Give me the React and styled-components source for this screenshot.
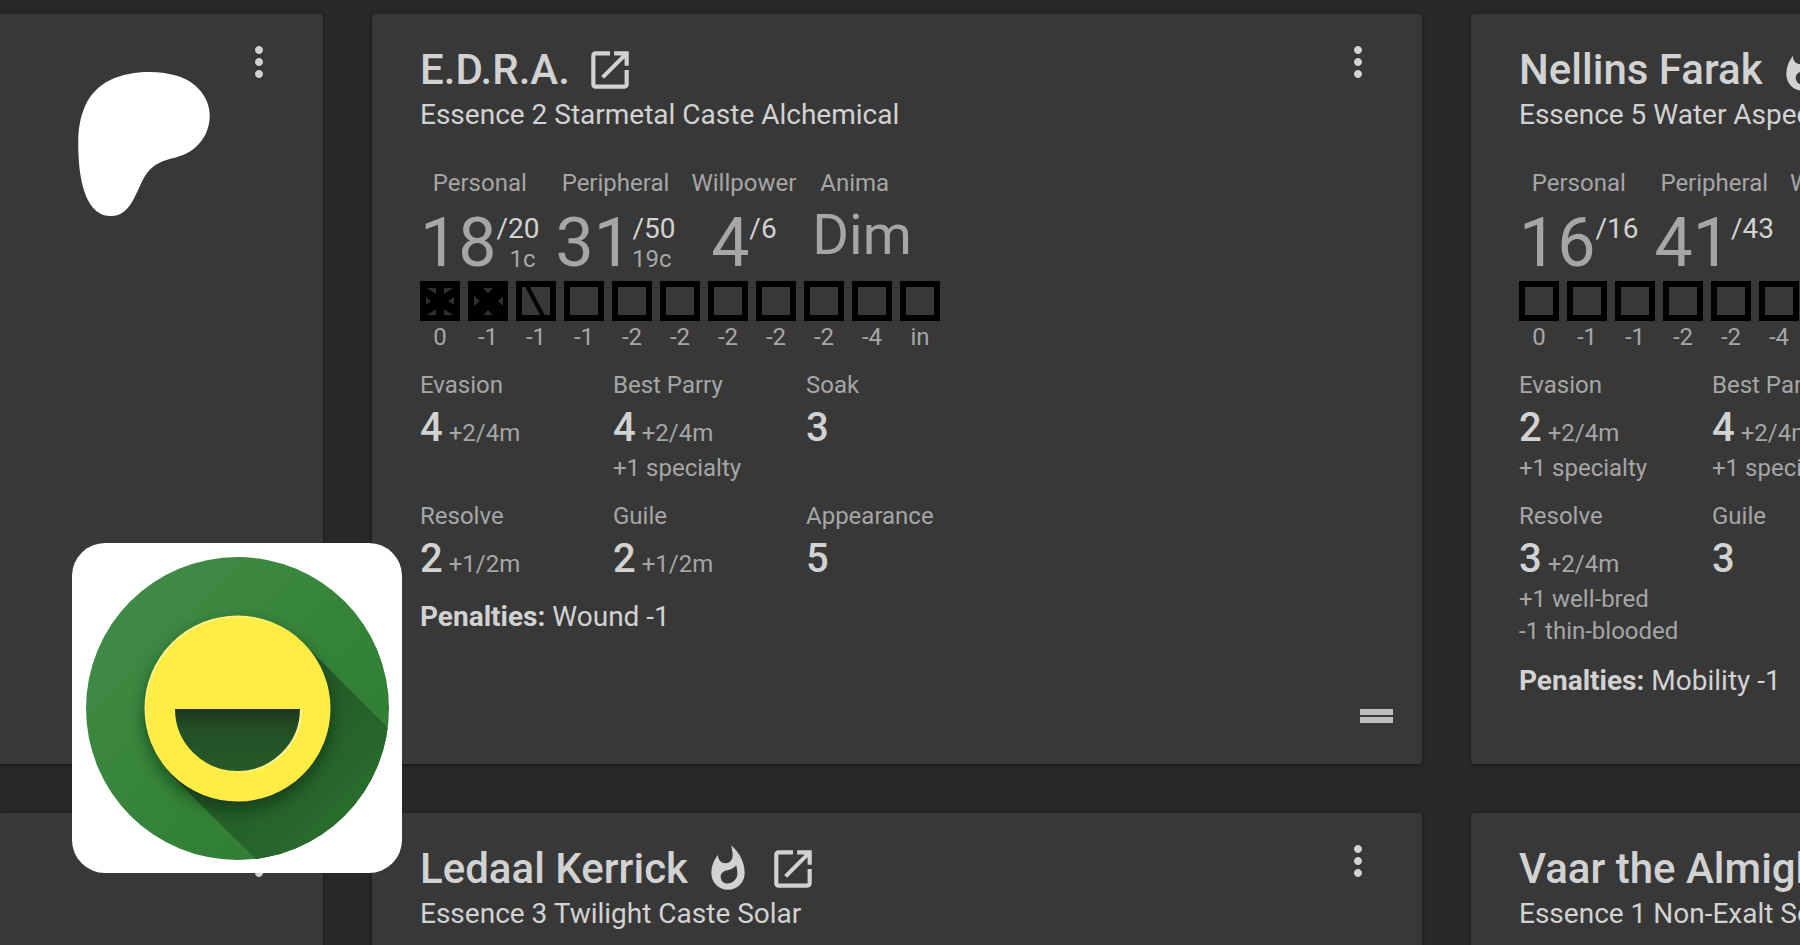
import React from 'react';
import styled, { createGlobalStyle } from 'styled-components';
import { MdMoreVert, MdOpenInNew, MdWhatshot } from 'react-icons/md';

const characters = {
    edra: {
        name: 'E.D.R.A.',
        info: 'Essence 2 Starmetal Caste Alchemical',
        pools: [
            { label: 'Personal', current: 18, total: 20, committed: '1c' },
            { label: 'Peripheral', current: 31, total: 50, committed: '19c' },
            { label: 'Willpower', current: 4, total: 6 },
        ],
        anima: 'Dim',
        health: [
            ['aggravated', '0'], ['lethal', '-1'], ['bashing', '-1'], ['', '-1'],
            ['', '-2'], ['', '-2'], ['', '-2'], ['', '-2'], ['', '-2'], ['', '-4'], ['', 'in'],
        ],
        stats: [
            [
                { label: 'Evasion', value: 4, bonus: '+2/4m' },
                { label: 'Best Parry', value: 4, bonus: '+2/4m', notes: ['+1 specialty'] },
                { label: 'Soak', value: 3 },
            ],
            [
                { label: 'Resolve', value: 2, bonus: '+1/2m' },
                { label: 'Guile', value: 2, bonus: '+1/2m' },
                { label: 'Appearance', value: 5 },
            ],
        ],
        penalties: 'Wound -1',
    },
    nellins: {
        name: 'Nellins Farak',
        inCombat: true,
        info: 'Essence 5 Water Aspect',
        pools: [
            { label: 'Personal', current: 16, total: 16 },
            { label: 'Peripheral', current: 41, total: 43 },
            { label: 'Willpower', current: 5, total: 5 },
        ],
        health: [['', '0'], ['', '-1'], ['', '-1'], ['', '-2'], ['', '-2'], ['', '-4']],
        stats: [
            [
                { label: 'Evasion', value: 2, bonus: '+2/4m', notes: ['+1 specialty'] },
                { label: 'Best Parry', value: 4, bonus: '+2/4m', notes: ['+1 specialty'] },
            ],
            [
                { label: 'Resolve', value: 3, bonus: '+2/4m', notes: ['+1 well-bred', '-1 thin-blooded'] },
                { label: 'Guile', value: 3 },
            ],
        ],
        penalties: 'Mobility -1',
    },
    ledaal: { name: 'Ledaal Kerrick', inCombat: true, info: 'Essence 3 Twilight Caste Solar' },
    vaar: { name: 'Vaar the Almighty', info: 'Essence 1 Non-Exalt Sorcerer' },
};

const HealthBox = ({ damage }) => (
    <svg width="40" height="40" viewBox="0 0 40 40" aria-hidden="true">
        <rect x="3" y="3" width="34" height="34" fill="none" stroke="#000" strokeWidth="6"/>
        {damage === 'bashing' && <path d="M11 5L27 35" stroke="#000" strokeWidth="4"/>}
        {damage === 'lethal' && <>
            <rect x="4" y="4" width="32" height="32" fill="#000"/>
            <path d="M15 7h10l-5 5zM15 34h10l-5-5zM6 15v10l6-5zM35 15v10l-5-5z" fill="#2e3034"/>
        </>}
        {damage === 'aggravated' && <>
            <rect x="4" y="4" width="32" height="32" fill="#000"/>
            <path
                d="M7 7h9v6zM33 7h-9v6zM7 34h9v-6zM33 34h-9v-6zM6 16v8l5-4zM34 16v8l-6-4z"
                fill="#2e3034"
            />
        </>}
    </svg>
);

const CharacterCard = ({ character }) => (
    <Card>
        <Header>
            {character && (
                <Heading>
                    <TitleRow>
                        <Name>{character.name}</Name>
                        {character.inCombat && <MdWhatshot size={50}/>}
                        <OpenLink href="#" aria-label={`Open ${character.name}`}>
                            <MdOpenInNew size={50}/>
                        </OpenLink>
                    </TitleRow>
                    <Info>{character.info}</Info>
                </Heading>
            )}
            <MenuButton type="button" aria-label="More">
                <MdMoreVert size={48}/>
            </MenuButton>
        </Header>
        {character?.pools && (
            <Body>
                <Pools>
                    {character.pools.map((pool) => (
                        <Pool key={pool.label}>
                            <Label>{pool.label}</Label>
                            <PoolValue>
                                <Current>{pool.current}</Current>
                                <PoolSide>
                                    <Total>/{pool.total}</Total>
                                    {pool.committed && <Committed>{pool.committed}</Committed>}
                                </PoolSide>
                            </PoolValue>
                        </Pool>
                    ))}
                    {character.anima && (
                        <Pool $left>
                            <Label>Anima</Label>
                            <Anima>{character.anima}</Anima>
                        </Pool>
                    )}
                </Pools>
                <Health>
                    {character.health.map(([damage, penalty], i) => (
                        <Level key={i}>
                            <HealthBox damage={damage}/>
                            <Penalty>{penalty}</Penalty>
                        </Level>
                    ))}
                </Health>
                <Stats>
                    {character.stats.map((row, i) => (
                        <StatRow key={i}>
                            {row.map((stat) => (
                                <div key={stat.label}>
                                    <Label>{stat.label}</Label>
                                    <StatValue>
                                        <strong>{stat.value}</strong>
                                        {stat.bonus && <span>{stat.bonus}</span>}
                                    </StatValue>
                                    {stat.notes?.map((note) => <Note key={note}>{note}</Note>)}
                                </div>
                            ))}
                        </StatRow>
                    ))}
                </Stats>
                <Penalties><b>Penalties:</b> {character.penalties}</Penalties>
            </Body>
        )}
        <Footer>
            <svg width="48" height="24" viewBox="0 0 48 24" aria-hidden="true">
                <path d="M8 5h33v6H8zM8 13h33v6H8z" fill="currentColor"/>
            </svg>
        </Footer>
    </Card>
);

const PatreonLogo = () => (
    <svg width="144" height="144" viewBox="0 0 24 24" aria-label="Patreon">
        <path
            fill="#fff"
            d="M22.957 7.21c-.004-3.064-2.391-5.576-5.191-6.482-3.478-1.125-8.064-.962-11.384.604C2.357 3.231 1.093 7.391 1.046 11.54c-.039 3.411.302 12.396 5.369 12.46 3.765.047 4.326-4.804 6.068-7.141 1.24-1.662 2.836-2.132 4.801-2.618 3.376-.836 5.678-3.501 5.673-7.031Z"
        />
    </svg>
);

const AppLogo = () => (
    <svg width="330" height="330" viewBox="0 0 330 330" aria-label="Lot-Casting Atemi">
        <defs>
            <linearGradient id="green" x1="0" y1="0" x2="1" y2="1">
                <stop offset="0.1" stopColor="#418b47"/>
                <stop offset="0.6" stopColor="#338237"/>
                <stop offset="1" stopColor="#2f7a33"/>
            </linearGradient>
            <linearGradient id="long" gradientUnits="userSpaceOnUse" x1="165" y1="165" x2="270" y2="270">
                <stop offset="0" stopColor="#225226"/>
                <stop offset="1" stopColor="#296b2d"/>
            </linearGradient>
            <linearGradient id="mouth" x1="0" y1="0" x2="0" y2="1">
                <stop offset="0" stopColor="#1b381c"/>
                <stop offset="0.35" stopColor="#235026"/>
                <stop offset="1" stopColor="#265a29"/>
            </linearGradient>
            <linearGradient id="rim" x1="0" y1="0" x2="1" y2="1">
                <stop offset="0.1" stopColor="#fff59a"/>
                <stop offset="0.45" stopColor="#ffec44"/>
            </linearGradient>
            <linearGradient id="lip" x1="0" y1="0" x2="1" y2="0">
                <stop offset="0.3" stopColor="#ffec44"/>
                <stop offset="0.8" stopColor="#fff59a"/>
            </linearGradient>
            <clipPath id="disc"><circle cx="165.5" cy="165.5" r="151.5"/></clipPath>
            <filter id="soft" x="-20%" y="-20%" width="140%" height="140%">
                <feGaussianBlur stdDeviation="8"/>
            </filter>
        </defs>
        <circle cx="165.5" cy="165.5" r="151.5" fill="url(#green)"/>
        <g clipPath="url(#disc)">
            <path d="M231 100L431 300L300 431L99 232z" fill="url(#long)"/>
            <circle cx="165.5" cy="173" r="92" fill="#0d2810" opacity="0.65" filter="url(#soft)"/>
        </g>
        <circle cx="165.5" cy="165.5" r="92" fill="#ffec44" stroke="url(#rim)" strokeWidth="2"/>
        <path d="M102 166h127a63.5 63 0 0 1-127 0z" fill="url(#mouth)"/>
        <path d="M229 166a63.5 63 0 0 1-127 0" fill="none" stroke="url(#lip)" strokeWidth="2"/>
    </svg>
);

const App = () => (
    <Page>
        <GlobalStyle/>
        <Grid>
            <CharacterCard/>
            <CharacterCard character={characters.edra}/>
            <CharacterCard character={characters.nellins}/>
            <CharacterCard/>
            <CharacterCard character={characters.ledaal}/>
            <CharacterCard character={characters.vaar}/>
        </Grid>
        <Overlay>
            <PatreonLogo/>
            <LogoTile>
                <AppLogo/>
            </LogoTile>
        </Overlay>
    </Page>
);

export default App;

const GlobalStyle = createGlobalStyle`
  * {
    box-sizing: border-box;
  }

  body {
    margin: 0;
    background-color: #292929;
    color: #d2d2d2;
    font-family: Roboto, 'Liberation Sans', sans-serif;
  }

  svg {
    display: block;
    flex-shrink: 0;
  }
`;

const Page = styled.main`
  position: relative;
  height: 100vh;
  overflow: hidden;
`;

/* the last column runs off the right side of the window */
const Grid = styled.div`
  display: grid;
  grid-template-columns: 323px repeat(2, calc(100vw - 750px));
  gap: 49px;
  padding-top: 14px;
`;

const Card = styled.section`
  display: flex;
  flex-direction: column;
  min-height: 750px;
  background-color: #383838;
  border-radius: 4px;
  box-shadow: 0 2px 4px rgba(0, 0, 0, 0.3), 0 0 6px rgba(0, 0, 0, 0.15);
  white-space: nowrap;

  &:nth-child(3n + 1) {
    border-radius: 0 4px 4px 0;
  }
`;

const Header = styled.header`
  display: flex;
  align-items: flex-start;
  padding: 24px 40px 0 48px;
`;

const Heading = styled.div`
  padding-top: 8px;
`;

const TitleRow = styled.div`
  display: flex;
  align-items: center;
  gap: 15px;
  height: 48px;
`;

const Name = styled.h2`
  margin: 0;
  font-size: 42px;
  font-weight: 500;
  line-height: 48px;
`;

const OpenLink = styled.a`
  color: inherit;
`;

const Info = styled.p`
  margin: 0;
  font-size: 28px;
  line-height: 42px;
`;

const MenuButton = styled.button`
  flex-shrink: 0;
  margin-left: auto;
  padding: 0;
  border: none;
  background: none;
  color: inherit;
  cursor: pointer;
`;

const Body = styled.div`
  padding: 31px 48px 0;
`;

const Pools = styled.div`
  display: flex;
  gap: 16px;
`;

const Label = styled.div`
  color: #a6a6a6;
  font-size: 24px;
  line-height: 32px;
`;

const Pool = styled.div`
  text-align: ${({ $left }) => ($left ? 'left' : 'center')};

  ${Label} {
    margin-bottom: 8px;
    padding-left: ${({ $left }) => ($left ? '8px' : '0')};
  }
`;

const PoolValue = styled.div`
  display: flex;
  justify-content: center;
  height: 72px;
`;

const Current = styled.span`
  color: #a6a6a6;
  font-size: 68px;
  line-height: 72px;
`;

const PoolSide = styled.div`
  padding-top: 6px;
  text-align: right;
`;

const Total = styled.div`
  font-size: 28px;
  line-height: 32px;
`;

const Committed = styled.div`
  padding-right: 4px;
  color: #a6a6a6;
  font-size: 24px;
  line-height: 28px;
`;

const Anima = styled.div`
  color: #a6a6a6;
  font-size: 56px;
  line-height: 56px;
`;

const Health = styled.div`
  display: flex;
  gap: 8px;
  padding-top: 2px;
`;

const Level = styled.div`
  width: 40px;
  flex-shrink: 0;
`;

const Penalty = styled.div`
  color: #a6a6a6;
  font-size: 24px;
  line-height: 32px;
  text-align: center;
`;

const Stats = styled.div`
  display: flex;
  flex-direction: column;
  gap: 16px;
  margin-top: 16px;
`;

const StatRow = styled.div`
  display: grid;
  grid-auto-flow: column;
  grid-auto-columns: 193px;
`;

const StatValue = styled.div`
  display: flex;
  align-items: baseline;
  gap: 6px;
  height: 51px;
  color: #a6a6a6;
  font-size: 24px;

  strong {
    color: #d2d2d2;
    font-size: 40px;
    font-weight: 500;
    line-height: 54px;
  }
`;

const Note = styled.div`
  color: #a6a6a6;
  font-size: 24px;
  line-height: 32px;
`;

const Penalties = styled.p`
  margin: 14px 0 0;
  font-size: 28px;
  line-height: 40px;
`;

const Footer = styled.footer`
  display: flex;
  justify-content: flex-end;
  margin-top: auto;
  padding: 0 22px 36px;
  color: #bdbdbd;
`;

const Overlay = styled.div`
  position: absolute;
  inset: 0;
  display: flex;
  flex-direction: column;
  align-items: flex-start;
  justify-content: space-between;
  padding: 72px;
  pointer-events: none;
`;

const LogoTile = styled.div`
  overflow: hidden;
  background-color: #fff;
  border-radius: 33px;
`;
